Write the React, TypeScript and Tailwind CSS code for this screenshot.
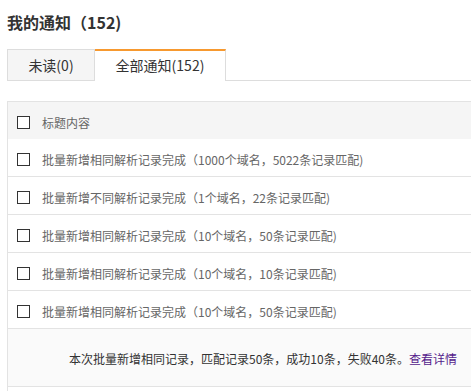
import React from "react";

const rows = [
	"批量新增相同解析记录完成（1000个域名，5022条记录匹配)",
	"批量新增不同解析记录完成（1个域名，22条记录匹配)",
	"批量新增相同解析记录完成（10个域名，50条记录匹配)",
	"批量新增相同解析记录完成（10个域名，10条记录匹配)",
	"批量新增相同解析记录完成（10个域名，50条记录匹配)",
];

function Checkbox() {
	return <span className="block h-[13px] w-[13px] shrink-0 border border-[#333] bg-white" />;
}

export default function App() {
	return (
		<div
			className="h-[391px] w-[471px] overflow-hidden bg-white"
			style={{ fontFamily: '"Noto Sans CJK SC", "Noto Sans", sans-serif' }}
		>
			{/* Title */}
			<h1 className="pl-[7px] pt-[10px] text-[16px] font-bold leading-[24px] text-[#333]">
				我的通知（152)
			</h1>

			{/* Tabs */}
			<div className="ml-[7px] mt-[15px] flex items-end border-b border-[#ddd]">
				<div className="flex h-[31px] w-[88px] items-center justify-center border-x border-t border-[#ddd] bg-[#f5f5f5] text-[14px] text-[#333]">
					未读(0)
				</div>
				<div className="relative -mb-px flex h-[32px] w-[131px] items-center justify-center border-r border-t-2 border-r-[#ddd] border-t-[#f7992f] bg-white pb-px text-[14px] text-[#333]">
					全部通知(152)
				</div>
			</div>

			{/* Table */}
			<div className="ml-[7px] mt-[20px] w-[520px] border-l border-t border-[#e3e3e3] text-[12px]">
				<div className="flex h-[37px] items-center gap-3 bg-[#f5f5f5] pl-[9px] pt-[4px] text-[#666]">
					<Checkbox />
					<span>标题内容</span>
				</div>
				{rows.map((row, i) => (
					<div
						key={i}
						className="flex h-[38px] items-center gap-3 border-b border-[#e3e3e3] pl-[9px] pt-[4px] text-[#666]"
					>
						<Checkbox />
						<span>{row}</span>
					</div>
				))}
				<div className="flex h-[58px] items-center border-b border-[#e3e3e3] bg-[#fafafa] pl-[61px] pt-[3px] text-[#333]">
					<span>
						本次批量新增相同记录，匹配记录50条，成功10条，失败40条。
						<a href="#" className="text-[#551a8b]">
							查看详情
						</a>
					</span>
				</div>
				<div className="h-[20px]" />
			</div>
		</div>
	);
}
